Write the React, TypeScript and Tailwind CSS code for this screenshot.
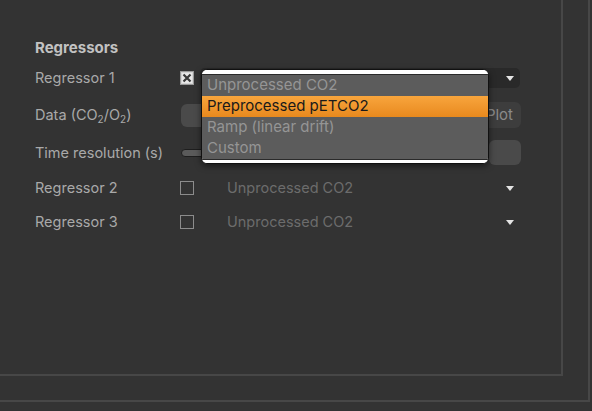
import React from 'react';

const font = { fontFamily: 'Inter, "Liberation Sans", sans-serif' };

function Checkbox({ checked }: { checked?: boolean }) {
  if (checked) {
    return (
      <div className="w-[14px] h-[14px] border border-[#9a9a9a] bg-[#d4d4d4] flex items-center justify-center shrink-0">
        <svg width="10" height="10" viewBox="0 0 10 10">
          <rect x="0" y="0" width="10" height="10" fill="#e8e8e8" />
          <path d="M1.5 1.5 L8.5 8.5 M8.5 1.5 L1.5 8.5" stroke="#3a3a3a" strokeWidth="2.2" />
        </svg>
      </div>
    );
  }
  return <div className="w-[14px] h-[14px] border-[1.5px] border-[#8c8c8c] shrink-0" />;
}

function Arrow() {
  return (
    <svg width="8" height="5" viewBox="0 0 8 5" className="shrink-0">
      <path d="M0 0 H8 L4 5 Z" fill="#e4e4e4" />
    </svg>
  );
}

// the open combo (row 1) has its text covered by the popup
function Combo({ open }: { open?: boolean }) {
  return (
    <div
      className={`ml-[6px] w-[320px] h-[20px] rounded-[5px] flex items-center pl-[27px] pr-[6px] ${
        open ? 'bg-[#292929]' : ''
      }`}
    >
      <span className="flex-1 text-[14.5px] text-[#6c6c6c]">{open ? '' : 'Unprocessed CO2'}</span>
      <Arrow />
    </div>
  );
}

function Label({ children }: { children: React.ReactNode }) {
  return <div className="w-[145px] shrink-0 text-[14.5px] text-[#a9a9a9]">{children}</div>;
}

const items = ['Unprocessed CO2', 'Preprocessed pETCO2', 'Ramp (linear drift)', 'Custom'];

function Popup() {
  return (
    <div className="absolute left-[201px] top-[69px] w-[288px] h-[95px] rounded-[6px] bg-white border border-[#111] overflow-hidden flex flex-col shadow-[0_2px_6px_rgba(0,0,0,0.5)]">
      <div className="h-[4px] shrink-0 bg-white" />
      <div className="flex-1 bg-[#5c5c5c] flex flex-col border-y border-[#2a2a2a]">
        {items.map((it, i) => (
          <div
            key={it}
            className={`h-[21px] flex items-center pl-[5px] text-[15px] ${
              i === 1
                ? 'bg-gradient-to-b from-[#f8a53c] to-[#e8891d] text-[#1a1a1a]'
                : 'text-[#959595]'
            }`}
          >
            {it}
          </div>
        ))}
      </div>
      <div className="h-[4px] shrink-0 bg-white" />
    </div>
  );
}

export default function App() {
  return (
    <div className="w-[592px] h-[411px] bg-[#333333] overflow-hidden relative" style={font}>
      <div className="w-[590px] h-[402px] border-r-2 border-b-2 border-[#474747]">
        <div className="w-[563px] h-[376px] border-r-2 border-b-2 border-[#474747] pl-[35px] pt-[38px] flex flex-col">
          <div className="h-[20px] flex items-center text-[15px] font-bold text-[#c2c2c2]">Regressors</div>

          <div className="mt-[10px] h-[20px] flex items-center">
            <Label>Regressor 1</Label>
            <Checkbox checked />
            <Combo open />
          </div>

          <div className="mt-[14px] h-[26px] flex items-center">
            <Label>
              Data (CO<sub className="text-[10px] align-baseline relative top-[3px]">2</sub>/O
              <sub className="text-[10px] align-baseline relative top-[3px]">2</sub>)
            </Label>
            <div className="ml-[1px] w-[280px] h-[23px] rounded-[6px] bg-[#4a4a4a]" />
            <div className="ml-[6px] w-[54px] h-[26px] rounded-[6px] bg-[#3d3d3d] flex items-center justify-end pr-[8px] text-[15px] text-[#8a8a8a]">
              Plot
            </div>
          </div>

          <div className="mt-[12px] h-[25px] flex items-center">
            <Label>Time resolution (s)</Label>
            <div className="ml-[1px] w-[290px] h-[8px] rounded-full bg-[#5a5a5a] border border-[#1e1e1e]" />
            <div className="ml-[18px] w-[32px] h-[25px] rounded-[6px] bg-[#4a4a4a]" />
          </div>

          <div className="mt-[13px] h-[20px] flex items-center">
            <Label>Regressor 2</Label>
            <Checkbox />
            <Combo />
          </div>

          <div className="mt-[14px] h-[20px] flex items-center">
            <Label>Regressor 3</Label>
            <Checkbox />
            <Combo />
          </div>
        </div>
      </div>
      <Popup />
    </div>
  );
}
